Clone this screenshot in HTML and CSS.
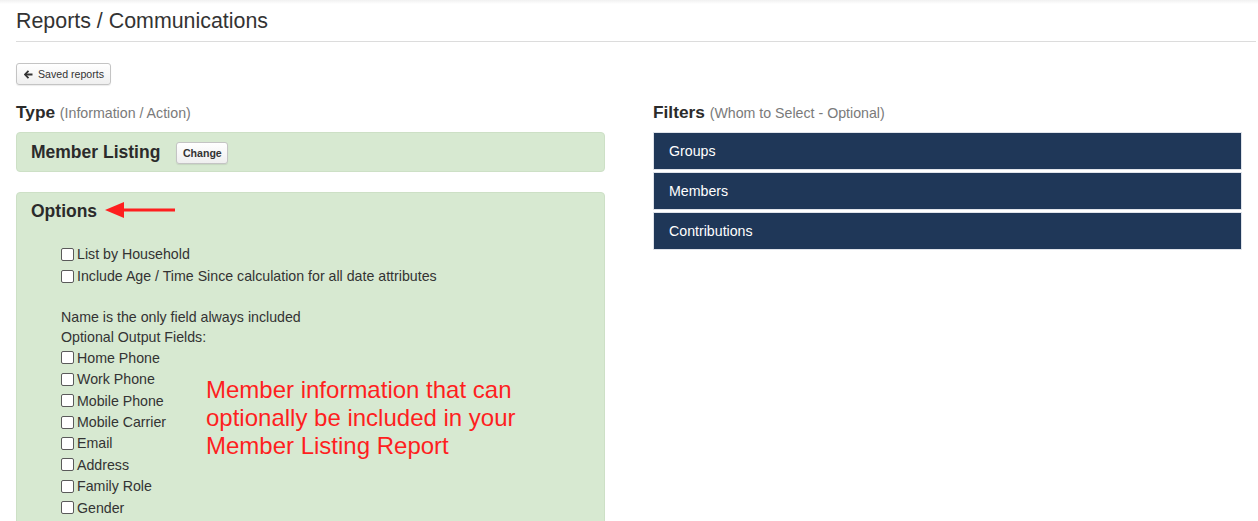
FILE: index.html
```html
<!DOCTYPE html>
<html>
<head>
<meta charset="utf-8">
<link rel="stylesheet" href="styles.css">
</head>
<body>
<div class="topband"></div>
<div class="page">
  <header class="header"><h1>Reports / Communications</h1></header>
  <div class="toolbar">
    <button class="btn btn-back"><svg class="back-arrow" width="9" height="9" viewBox="0 0 9 9"><path d="M4.5 0.8 L1 4.5 L4.5 8.2" fill="none" stroke="#333" stroke-width="1.8"/><path d="M1.5 4.5 H8.5" stroke="#333" stroke-width="2"/></svg>Saved reports</button>
  </div>
  <div class="cols">
    <div class="col">
      <h2 class="section-title">Type <span class="sub">(Information / Action)</span></h2>
      <div class="panel panel-type">
        <span class="panel-heading">Member Listing</span>
        <button class="btn btn-change">Change</button>
      </div>
      <div class="panel panel-options">
        <div class="options-head">
          <span class="panel-heading">Options</span>
          <svg class="arrow" width="72" height="18" viewBox="0 0 72 18"><polygon points="0,9 19,1 19,17" fill="#fe1f1f"/><rect x="18" y="7.5" width="52" height="3" fill="#fe1f1f"/></svg>
        </div>
        <div class="options-body">
          <label class="check top"><input type="checkbox">List by Household</label>
          <label class="check top"><input type="checkbox">Include Age / Time Since calculation for all date attributes</label>
          <div class="note first">Name is the only field always included</div>
          <div class="note">Optional Output Fields:</div>
          <label class="check"><input type="checkbox">Home Phone</label>
          <label class="check"><input type="checkbox">Work Phone</label>
          <label class="check"><input type="checkbox">Mobile Phone</label>
          <label class="check"><input type="checkbox">Mobile Carrier</label>
          <label class="check"><input type="checkbox">Email</label>
          <label class="check"><input type="checkbox">Address</label>
          <label class="check"><input type="checkbox">Family Role</label>
          <label class="check"><input type="checkbox">Gender</label>
        </div>
        <div class="annotation">Member information that can<br>optionally be included in your<br>Member Listing Report</div>
      </div>
    </div>
    <div class="col">
      <h2 class="section-title">Filters <span class="sub">(Whom to Select - Optional)</span></h2>
      <div class="filter">Groups</div>
      <div class="filter">Members</div>
      <div class="filter">Contributions</div>
    </div>
  </div>
</div>
</body>
</html>
```

FILE: styles.css
```css
* { box-sizing: border-box; }
html, body { margin: 0; padding: 0; background: #fff; }
body {
  font-family: "Liberation Sans", Arial, sans-serif;
  color: #333;
  font-size: 14.2px;
  overflow: hidden;
  height: 521px;
}
.topband {
  height: 4px;
  background: linear-gradient(#f1f1f1, #fff);
}
.page {
  padding: 0 2px 0 16px;
}
.header {
  height: 38px;
  border-bottom: 1px solid #dcdcdc;
}
.header h1 {
  margin: 0;
  font-size: 21.4px;
  font-weight: normal;
  line-height: 26px;
  padding-top: 4px;
  color: #333;
}
.toolbar {
  padding-top: 21px;
  height: 61px;
}
.btn {
  font-family: "Liberation Sans", Arial, sans-serif;
  font-size: 11px;
  color: #333;
  background: linear-gradient(#fff, #efefef);
  border: 1px solid #c4c4c4;
  border-radius: 3px;
  box-shadow: 0 1px 1px rgba(0,0,0,0.08);
  padding: 0;
  cursor: pointer;
  white-space: nowrap;
}
.btn-back {
  width: 95px;
  height: 22px;
  display: flex;
  align-items: center;
  padding-left: 7px;
  font-size: 10.6px;
}
.back-arrow {
  margin-right: 5px;
  flex: none;
}
.cols {
  display: grid;
  grid-template-columns: 589px 589px;
  column-gap: 48px;
}
.section-title {
  margin: 0;
  font-size: 17.3px;
  font-weight: bold;
  line-height: 18px;
  height: 24px;
  color: #2b2b2b;
}
.section-title .sub {
  font-size: 14.2px;
  font-weight: normal;
  color: #7a7a7a;
}
.panel {
  background: #d7e9d1;
  border: 1px solid #cde0c6;
  border-radius: 4px;
  margin-top: 5px;
}
.panel-type {
  height: 40px;
  display: flex;
  align-items: center;
  padding-left: 14px;
}
.panel-heading {
  font-size: 17.5px;
  font-weight: bold;
  color: #2b2b2b;
}
.btn-change {
  margin-left: 16px;
  width: 52px;
  height: 22px;
  font-weight: bold;
  font-size: 10.6px;
  margin-top: 1px;
}
.panel-options {
  margin-top: 20px;
  height: 340px;
  position: relative;
  padding-left: 14px;
}
.options-head {
  display: flex;
  align-items: center;
  height: 36px;
  padding-top: 1px;
}
.arrow {
  margin-left: 8px;
  margin-top: -4px;
}
.options-body {
  padding-left: 30px;
  padding-top: 14px;
}
.check {
  display: flex;
  align-items: center;
  height: 21.45px;
  color: #333;
}
.check.top { height: 22px; }
.check input {
  appearance: none;
  -webkit-appearance: none;
  width: 13px;
  height: 13px;
  margin: 0 3px 0 0;
  border: 1px solid #5a5a5a;
  border-radius: 2px;
  background: #fff;
  flex: none;
}
.note {
  height: 20px;
  line-height: 20px;
}
.note.first { margin-top: 20px; }
.annotation {
  position: absolute;
  left: 189px;
  top: 183px;
  font-size: 24px;
  line-height: 28px;
  color: #fe1f1f;
}
.filter {
  background: #1f3758;
  border: 1px solid #dfe3ea;
  color: #fff;
  height: 38px;
  line-height: 36px;
  padding-left: 15px;
  margin-top: 2px;
}
.filter:first-of-type { margin-top: 5px; }
```
